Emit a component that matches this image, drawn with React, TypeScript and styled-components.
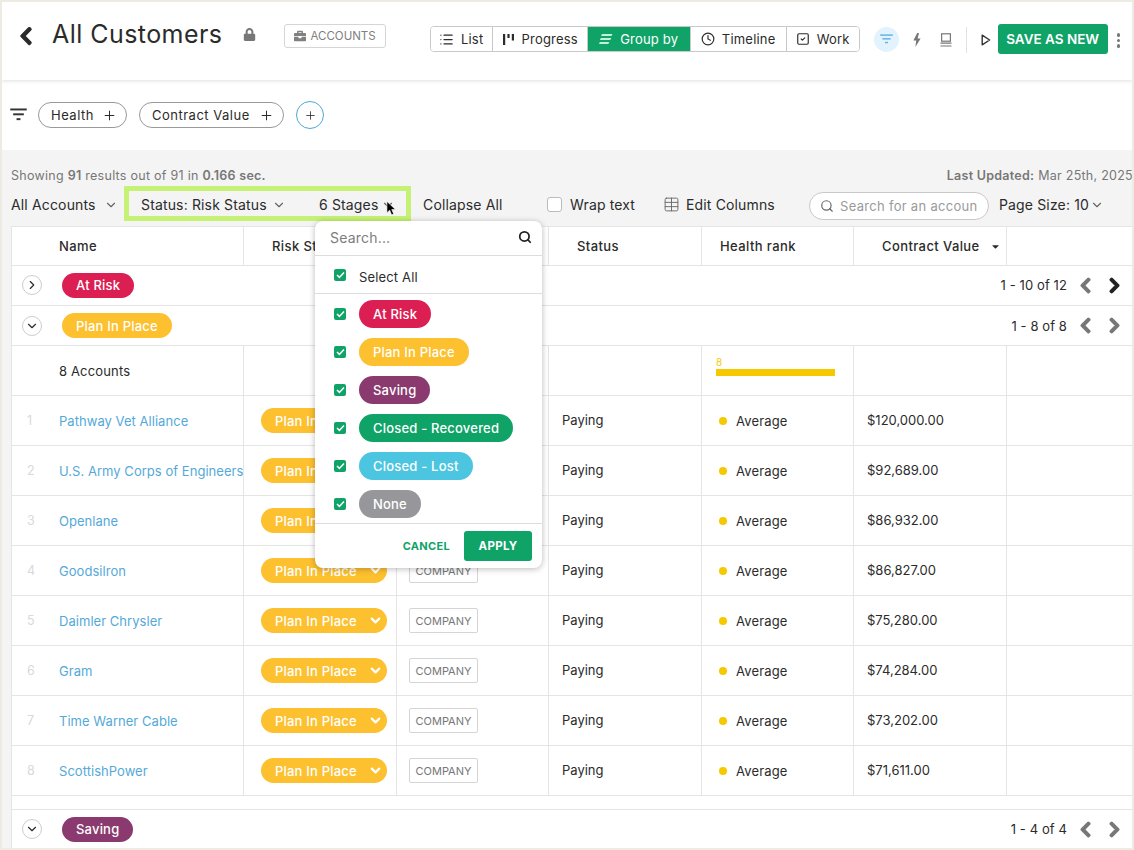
import React from "react";
import styled, { createGlobalStyle } from "styled-components";
import { Plus, Search, ChevronDown, ChevronRight, Clock, SquareCheck, List, Table } from "lucide-react";
import { FaBriefcase, FaChevronLeft, FaChevronRight, FaLock, FaCaretDown } from "react-icons/fa";

const GlobalStyle = createGlobalStyle`
  html, body {
    margin: 0;
    padding: 0;
    background: #eeebe5;
  }
  * {
    box-sizing: border-box;
  }
  body {
    font-family: Inter, "Noto Sans", "Liberation Sans", sans-serif;
    color: #2b2b2b;
  }
`;

const GREEN = "#0fa368";
const STATUS_COLORS: Record<string, string> = {
  "At Risk": "#dc1f52",
  "Plan In Place": "#fdc02f",
  Saving: "#8a3a6e",
  "Closed - Recovered": "#0fa368",
  "Closed - Lost": "#4bc5e0",
  None: "#97979b",
};

const VIEWS = [
  { label: "List", width: 61, icon: <List size={15} /> },
  { label: "Progress", width: 95, icon: <ProgressIcon /> },
  { label: "Group by", width: 103, icon: <GroupIcon />, active: true },
  { label: "Timeline", width: 96, icon: <Clock size={14} /> },
  { label: "Work", width: 73, icon: <SquareCheck size={14} /> },
];

const ACCOUNTS = [
  { name: "Pathway Vet Alliance", value: "$120,000.00" },
  { name: "U.S. Army Corps of Engineers", value: "$92,689.00" },
  { name: "Openlane", value: "$86,932.00" },
  { name: "Goodsilron", value: "$86,827.00" },
  { name: "Daimler Chrysler", value: "$75,280.00" },
  { name: "Gram", value: "$74,284.00" },
  { name: "Time Warner Cable", value: "$73,202.00" },
  { name: "ScottishPower", value: "$71,611.00" },
];

function ProgressIcon() {
  return (
    <svg width="13" height="13" viewBox="0 0 13 13" fill="#2b2b2b">
      <rect x="1" y="1" width="2.2" height="11" />
      <rect x="5.4" y="1" width="2.2" height="4" />
      <rect x="9.8" y="1" width="2.2" height="6.5" />
    </svg>
  );
}

function GroupIcon() {
  return (
    <svg width="14" height="12" viewBox="0 0 14 12" fill="#bff0dc">
      <path d="M3 1h10.5l-1 2H2z" />
      <path d="M1.8 5h10.5l-1 2H.8z" />
      <path d="M.8 9h9.5l-1 2H0z" />
    </svg>
  );
}

function FilterIcon({ color, size = 17 }: { color: string; size?: number }) {
  return (
    <svg width={size} height={size * 0.8} viewBox="0 0 17 14" fill={color}>
      <rect x="0" y="0.5" width="17" height="2" />
      <rect x="3" y="5.5" width="11" height="2" />
      <rect x="6.5" y="10.5" width="4" height="2" />
    </svg>
  );
}

function BoltIcon() {
  return (
    <svg width="8" height="14" viewBox="0 0 8 14" fill="#777">
      <path d="M4.2 0 .4 7.4h2.8L2.4 14 7.6 5.6H4.6L6 0z" />
    </svg>
  );
}

function MonitorIcon() {
  return (
    <svg width="12" height="14" viewBox="0 0 12 14" fill="none" stroke="#777" strokeWidth="1.2">
      <rect x="1.6" y="0.8" width="8.8" height="7.4" />
      <path d="M0.5 10.2h11M0.5 13h11" />
    </svg>
  );
}

function PlayIcon() {
  return (
    <svg width="10" height="12" viewBox="0 0 10 12" fill="none" stroke="#333" strokeWidth="1.4">
      <path d="M1.2 1.2v9.6L8.6 6z" strokeLinejoin="round" />
    </svg>
  );
}

function CursorIcon() {
  return (
    <svg width="11" height="15" viewBox="0 0 13 18">
      <path d="M1 0.5v13.5l3.4-3 2.2 5.6 2.5-1-2.3-5.4h4.4z" fill="#000" stroke="#fff" strokeWidth="0.7" />
    </svg>
  );
}

const Page = styled.div`
  width: 1134px;
  height: 850px;
  padding: 2px;
  overflow: hidden;
  background: #eeebe5;
`;

const Screen = styled.div`
  height: 846px;
  overflow: hidden;
  background: #f4f4f4;
`;

const Header = styled.header`
  position: relative;
  z-index: 2;
  display: flex;
  align-items: flex-start;
  height: 78px;
  padding: 22px 0 0 14px;
  background: #fff;
  box-shadow: 0 1px 4px rgba(0, 0, 0, 0.13);
`;

const BackButton = styled.span`
  display: flex;
  margin-top: 2px;
  color: #2b2b2b;
  font-size: 20px;
  & svg {
    stroke: currentColor;
    stroke-width: 30px;
  }
`;

const Title = styled.h1`
  margin: 0 0 0 16px;
  font-size: 25px;
  line-height: 20px;
  font-weight: 400;
  letter-spacing: 0.45px;
  color: #2b2b2b;
`;

const LockIcon = styled.span`
  display: flex;
  margin: 4px 0 0 20px;
  color: #777;
  font-size: 13px;
`;

const TypeChip = styled.span`
  display: flex;
  align-items: center;
  gap: 5px;
  height: 24px;
  margin: 0 0 0 28px;
  padding: 0 9px;
  border: 1px solid #d5d5d5;
  border-radius: 3px;
  color: #808080;
  font-size: 11.5px;
  white-space: nowrap;
`;

const ViewGroup = styled.div`
  display: flex;
  height: 26px;
  margin: 2px 0 0 44px;
  border: 1px solid #c9c9c9;
  border-radius: 4px;
  overflow: hidden;
`;

const ViewTab = styled.span<{ $active?: boolean; $width: number }>`
  display: flex;
  align-items: center;
  justify-content: center;
  gap: 7px;
  width: ${(p) => p.$width}px;
  font-size: 13px;
  letter-spacing: 0.2px;
  white-space: nowrap;
  color: ${(p) => (p.$active ? "#fff" : "#2b2b2b")};
  background: ${(p) => (p.$active ? GREEN : "#fff")};
  & + & {
    border-left: 1px solid #c9c9c9;
  }
`;

const IconCircle = styled.span`
  display: flex;
  align-items: center;
  justify-content: center;
  width: 25px;
  height: 25px;
  margin: 3px 0 0 14px;
  border-radius: 50%;
  background: #e2f3fd;
`;

const HeaderIcon = styled.span<{ $left: number }>`
  display: flex;
  align-items: center;
  height: 25px;
  margin: 3px 0 0 ${(p) => p.$left}px;
`;

const Divider = styled.span`
  width: 1px;
  height: 26px;
  margin: 3px 0 0 14px;
  background: #e2e2e2;
`;

const SaveButton = styled.button`
  width: 110px;
  height: 30px;
  margin: 0 0 0 7px;
  padding: 0;
  border: 0;
  border-radius: 3px;
  background: ${GREEN};
  color: #fff;
  font: 600 13.5px Inter, sans-serif;
  white-space: nowrap;
`;

const Kebab = styled.span`
  display: flex;
  flex-direction: column;
  gap: 2px;
  margin: 9px 0 0 9px;
  & i {
    width: 3.5px;
    height: 3.5px;
    border-radius: 50%;
    background: #777;
  }
`;

const FilterBar = styled.div`
  display: flex;
  align-items: center;
  height: 70px;
  padding-left: 8px;
  background: #fff;
`;

const FilterPill = styled.span<{ $width: number }>`
  display: flex;
  align-items: center;
  justify-content: space-between;
  width: ${(p) => p.$width}px;
  height: 26px;
  margin-left: 12px;
  padding: 0 9px 0 12px;
  border: 1px solid #999;
  border-radius: 13px;
  font-size: 13px;
  letter-spacing: 0.5px;
  white-space: nowrap;
  &:first-of-type {
    margin-left: 11px;
  }
`;

const AddFilter = styled.span`
  display: flex;
  align-items: center;
  justify-content: center;
  width: 28px;
  height: 28px;
  margin-left: 12px;
  border: 1px solid #4ea8d8;
  border-radius: 50%;
`;

const ResultRow = styled.div`
  display: flex;
  justify-content: space-between;
  height: 36px;
  padding: 17px 0 0 9px;
  font-size: 12.5px;
  line-height: 18px;
  color: #777;
  letter-spacing: 0.27px;
  white-space: nowrap;
  & b {
    font-weight: 600;
  }
`;

const LastUpdated = styled.span`
  margin-right: -1px;
`;

const Toolbar = styled.div`
  display: flex;
  align-items: center;
  height: 35px;
  padding-left: 9px;
  font-size: 14px;
  letter-spacing: 0.15px;
  white-space: nowrap;
`;

const ToolText = styled.span<{ $left?: number; $width?: number }>`
  display: flex;
  align-items: center;
  gap: 6px;
  flex: none;
  margin-left: ${(p) => p.$left ?? 0}px;
  padding-top: 2px;
  width: ${(p) => (p.$width ? `${p.$width}px` : "auto")};
`;

const MutedChevron = styled(ChevronDown)<{ $left?: number }>`
  flex: none;
  margin: 2px 0 0 ${(p) => p.$left ?? 0}px;
  color: #666;
`;

const StatusBox = styled.div`
  position: relative;
  z-index: 3;
  display: flex;
  align-items: center;
  width: 287px;
  height: 35px;
  margin-left: 6px;
  padding-left: 12px;
  border: 5px solid #c5f274;
`;

const Cursor = styled.span`
  position: absolute;
  left: 257px;
  top: 10px;
  display: flex;
`;

const Checkbox = styled.span`
  flex: none;
  width: 15px;
  height: 15px;
  margin: 2px 0 0 43px;
  border: 1px solid #bbb;
  border-radius: 3px;
  background: #fff;
`;

const SearchBox = styled.div`
  display: flex;
  align-items: center;
  gap: 6px;
  flex: none;
  width: 180px;
  height: 28px;
  margin: 4px 0 0 32px;
  padding: 0 8px 0 10px;
  border: 1px solid #c9c9c9;
  border-radius: 14px;
  background: #fff;
  color: #9a9a9a;
  font-size: 13px;
  letter-spacing: 0.3px;
`;

const TableWrap = styled.div`
  margin: 5px 0 0 9px;
  border-left: 1px solid #e5e5e5;
  background: #fff;
`;

const GridRow = styled.div<{ $height: number }>`
  display: grid;
  grid-template-columns: 232px 153px 152px 153px 152px 153px 1fr;
  height: ${(p) => p.$height}px;
  border-top: 1px solid #e5e5e5;
`;

const Cell = styled.div`
  display: flex;
  align-items: center;
  min-width: 0;
  overflow: hidden;
  border-right: 1px solid #e5e5e5;
  font-size: 13px;
  letter-spacing: 0.15px;
  white-space: nowrap;
  &:last-child {
    border-right: 0;
  }
`;

const HeadCell = styled(Cell)<{ $left: number }>`
  padding-left: ${(p) => p.$left}px;
  font-weight: 500;
  letter-spacing: 0.4px;
`;

const GroupRow = styled.div<{ $height: number; $gap?: boolean }>`
  display: flex;
  align-items: center;
  height: ${(p) => p.$height}px;
  padding-left: 10px;
  border-top: 1px solid #e5e5e5;
  margin-top: ${(p) => (p.$gap ? 1 : 0)}px;
`;

const Toggle = styled.span`
  display: flex;
  align-items: center;
  justify-content: center;
  width: 20px;
  height: 20px;
  border: 1px solid #ccc;
  border-radius: 50%;
`;

const Pill = styled.span<{ $status: string; $height?: number }>`
  display: inline-flex;
  align-items: center;
  height: ${(p) => p.$height ?? 25}px;
  padding: 0 14px;
  border-radius: 14px;
  background: ${(p) => STATUS_COLORS[p.$status]};
  color: #fff;
  font-size: 13px;
  font-weight: 500;
  letter-spacing: 0.2px;
  white-space: nowrap;
`;

const GroupPill = styled(Pill)`
  margin-left: 20px;
`;

const Pager = styled.div`
  display: flex;
  align-items: center;
  margin-left: auto;
  font-size: 13px;
  letter-spacing: 0.1px;
`;

const PagerArrow = styled.span<{ $dark?: boolean; $left: number }>`
  display: flex;
  margin-left: ${(p) => p.$left}px;
  color: ${(p) => (p.$dark ? "#222" : "#777")};
  font-size: 17px;
  & svg {
    stroke: currentColor;
    stroke-width: 40px;
  }
`;

const Spacer = styled.div`
  height: 14px;
  border-top: 1px solid #e5e5e5;
`;

const SummaryLabel = styled.span`
  padding-left: 47px;
`;

const SummaryBar = styled.div`
  display: flex;
  flex-direction: column;
  width: 119px;
  margin: 0 0 8px 14px;
  color: #f5c800;
  font-size: 10px;
  line-height: 11px;
  &::after {
    content: "";
    height: 7px;
    margin-top: 1px;
    background: #f5c800;
  }
`;

const RowNum = styled.span`
  flex: none;
  width: 47px;
  padding-left: 15px;
  color: #d9d9d9;
  font-size: 12.5px;
`;

const AccountName = styled.span`
  color: #55a9d8;
  font-size: 13px;
  letter-spacing: 0.04px;
`;

const RowPill = styled(Pill)`
  flex: none;
  width: 126px;
  margin-left: 17px;
  justify-content: space-between;
  padding-right: 4px;
`;

const CompanyChip = styled.span`
  display: flex;
  align-items: center;
  justify-content: center;
  width: 69px;
  height: 25px;
  margin-left: 12px;
  border: 1px solid #d5d5d5;
  border-radius: 2px;
  color: #777;
  font-size: 11px;
  letter-spacing: 0;
`;

const PlainValue = styled.span`
  padding-left: 13px;
  margin-top: -2px;
  letter-spacing: 0;
`;

const Health = styled.span`
  display: flex;
  align-items: center;
  gap: 9px;
  padding-left: 17px;
  &::before {
    content: "";
    width: 8px;
    height: 8px;
    border-radius: 50%;
    background: #f5c800;
  }
`;

const Popup = styled.div`
  position: absolute;
  left: 186px;
  top: 30px;
  width: 227px;
  height: 347px;
  border-radius: 8px;
  background: #fff;
  box-shadow: 0 1px 6px rgba(0, 0, 0, 0.28);
  letter-spacing: 0;
`;

const PopupSearch = styled.div`
  display: flex;
  align-items: center;
  justify-content: space-between;
  height: 35px;
  padding: 0 10px 2px 15px;
  border-bottom: 1px solid #ddd;
  color: #7d7d7d;
  font-size: 14px;
  letter-spacing: 0.2px;
`;

const SelectAll = styled.div`
  display: flex;
  align-items: center;
  height: 38px;
  padding-left: 19px;
  border-bottom: 1px solid #ddd;
  font-size: 13px;
  letter-spacing: 0.15px;
`;

const SelectAllLabel = styled.span`
  margin-top: 4px;
`;

const OptionList = styled.div`
  display: flex;
  flex-direction: column;
  gap: 10px;
  height: 230px;
  padding: 6px 0 0 19px;
  border-bottom: 1px solid #ddd;
`;

const Option = styled.div`
  display: flex;
  align-items: center;
  height: 28px;
`;

const Check = styled.span`
  display: flex;
  align-items: center;
  justify-content: center;
  flex: none;
  width: 12px;
  height: 12px;
  margin-right: 13px;
  border-radius: 2px;
  background: ${GREEN};
`;

const PopupFooter = styled.div`
  display: flex;
  align-items: center;
  justify-content: flex-end;
  gap: 14px;
  height: 44px;
  padding: 0 10px 0 0;
`;

const CancelButton = styled.span`
  color: ${GREEN};
  font-size: 11px;
  font-weight: 700;
  letter-spacing: 0.3px;
`;

const ApplyButton = styled.span`
  display: flex;
  align-items: center;
  justify-content: center;
  width: 68px;
  height: 30px;
  border-radius: 3px;
  background: ${GREEN};
  color: #fff;
  font-size: 11.5px;
  font-weight: 700;
  letter-spacing: 0.3px;
`;

function CheckMark() {
  return (
    <Check>
      <svg width="9" height="8" viewBox="0 0 9 8" fill="none" stroke="#fff" strokeWidth="1.5">
        <path d="M1 4l2.4 2.4L8 1.4" />
      </svg>
    </Check>
  );
}

function PagerControls({ text, dark }: { text: string; dark?: boolean }) {
  return (
    <Pager>
      {text}
      <PagerArrow $left={10}>
        <FaChevronLeft />
      </PagerArrow>
      <PagerArrow $left={12} $dark={dark}>
        <FaChevronRight />
      </PagerArrow>
      <PagerArrow $left={9} />
    </Pager>
  );
}

export default function App() {
  return (
    <Page>
      <GlobalStyle />
      <Screen>
        <Header>
          <BackButton>
            <FaChevronLeft />
          </BackButton>
          <Title>All Customers</Title>
          <LockIcon>
            <FaLock />
          </LockIcon>
          <TypeChip>
            <FaBriefcase size={12} />
            ACCOUNTS
          </TypeChip>
          <ViewGroup>
            {VIEWS.map((v) => (
              <ViewTab key={v.label} $active={v.active} $width={v.width}>
                {v.icon}
                {v.label}
              </ViewTab>
            ))}
          </ViewGroup>
          <IconCircle>
            <FilterIcon color="#63b5e2" size={13} />
          </IconCircle>
          <HeaderIcon $left={14}>
            <BoltIcon />
          </HeaderIcon>
          <HeaderIcon $left={19}>
            <MonitorIcon />
          </HeaderIcon>
          <Divider />
          <HeaderIcon $left={14}>
            <PlayIcon />
          </HeaderIcon>
          <SaveButton>SAVE AS NEW</SaveButton>
          <Kebab>
            <i />
            <i />
            <i />
          </Kebab>
        </Header>

        <FilterBar>
          <FilterIcon color="#333" />
          <FilterPill $width={89}>
            Health
            <Plus size={15} strokeWidth={1.6} />
          </FilterPill>
          <FilterPill $width={145}>
            Contract Value
            <Plus size={15} strokeWidth={1.6} />
          </FilterPill>
          <AddFilter>
            <Plus size={13} strokeWidth={1.5} />
          </AddFilter>
        </FilterBar>

        <ResultRow>
          <span>
            Showing <b>91</b> results out of 91 in <b>0.166 sec.</b>
          </span>
          <LastUpdated>
            <b>Last Updated:</b> Mar 25th, 2025
          </LastUpdated>
        </ResultRow>

        <Toolbar>
          <ToolText $width={86}>All Accounts</ToolText>
          <MutedChevron size={14} $left={7} />
          <StatusBox>
            <ToolText $width={125}>Status: Risk Status</ToolText>
            <MutedChevron size={14} $left={6} />
            <ToolText $left={33} $width={56}>
              6 Stages
            </ToolText>
            <MutedChevron size={14} $left={6} />
            <Cursor>
              <CursorIcon />
            </Cursor>
            <Popup>
              <PopupSearch>
                Search...
                <Search size={14} strokeWidth={3} color="#222" />
              </PopupSearch>
              <SelectAll>
                <CheckMark />
                <SelectAllLabel>Select All</SelectAllLabel>
              </SelectAll>
              <OptionList>
                {Object.keys(STATUS_COLORS).map((s) => (
                  <Option key={s}>
                    <CheckMark />
                    <Pill $status={s} $height={28}>
                      {s}
                    </Pill>
                  </Option>
                ))}
              </OptionList>
              <PopupFooter>
                <CancelButton>CANCEL</CancelButton>
                <ApplyButton>APPLY</ApplyButton>
              </PopupFooter>
            </Popup>
          </StatusBox>
          <ToolText $left={12} $width={81}>
            Collapse All
          </ToolText>
          <Checkbox />
          <ToolText $left={8} $width={67}>
            Wrap text
          </ToolText>
          <ToolText $left={26} $width={114}>
            <Table size={17} strokeWidth={1.3} color="#666" />
            Edit Columns
          </ToolText>
          <SearchBox>
            <Search size={14} color="#666" style={{ flex: "none" }} />
            Search for an accoun
          </SearchBox>
          <ToolText $left={10} $width={86}>
            Page Size: 10
          </ToolText>
          <MutedChevron size={14} $left={5} />
        </Toolbar>

        <TableWrap>
          <GridRow $height={39}>
            <HeadCell $left={47}>Name</HeadCell>
            <HeadCell $left={28}>Risk Status</HeadCell>
            <HeadCell $left={20} />
            <HeadCell $left={28}>Status</HeadCell>
            <HeadCell $left={18}>Health rank</HeadCell>
            <HeadCell $left={28}>
              Contract Value
              <FaCaretDown size={11} style={{ marginLeft: 10 }} />
            </HeadCell>
            <HeadCell $left={0} />
          </GridRow>
          <GroupRow $height={39}>
            <Toggle>
              <ChevronRight size={14} />
            </Toggle>
            <GroupPill $status="At Risk">At Risk</GroupPill>
            <PagerControls text="1 - 10 of 12" dark />
          </GroupRow>
          <GroupRow $height={40} $gap>
            <Toggle>
              <ChevronDown size={14} />
            </Toggle>
            <GroupPill $status="Plan In Place">Plan In Place</GroupPill>
            <PagerControls text="1 - 8 of 8" />
          </GroupRow>
          <GridRow $height={50}>
            <Cell>
              <SummaryLabel>8 Accounts</SummaryLabel>
            </Cell>
            <Cell />
            <Cell />
            <Cell />
            <Cell>
              <SummaryBar>8</SummaryBar>
            </Cell>
            <Cell />
            <Cell />
          </GridRow>
          {ACCOUNTS.map((a, i) => (
            <GridRow key={a.name} $height={50}>
              <Cell>
                <RowNum>{i + 1}</RowNum>
                <AccountName>{a.name}</AccountName>
              </Cell>
              <Cell>
                <RowPill $status="Plan In Place">
                  Plan In Place
                  <ChevronDown size={15} strokeWidth={3.5} />
                </RowPill>
              </Cell>
              <Cell>
                <CompanyChip>COMPANY</CompanyChip>
              </Cell>
              <Cell>
                <PlainValue>Paying</PlainValue>
              </Cell>
              <Cell>
                <Health>Average</Health>
              </Cell>
              <Cell>
                <PlainValue>{a.value}</PlainValue>
              </Cell>
              <Cell />
            </GridRow>
          ))}
          <Spacer />
          <GroupRow $height={39}>
            <Toggle>
              <ChevronDown size={14} />
            </Toggle>
            <GroupPill $status="Saving">Saving</GroupPill>
            <PagerControls text="1 - 4 of 4" />
          </GroupRow>
        </TableWrap>
      </Screen>
    </Page>
  );
}
